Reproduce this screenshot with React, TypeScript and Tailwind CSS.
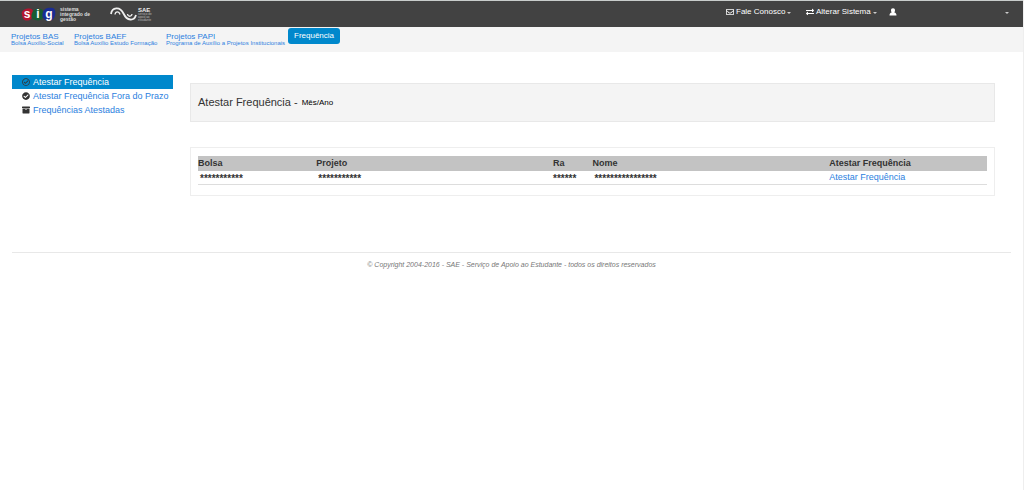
import { FaRegEnvelope, FaRegCheckCircle, FaCheckCircle, FaArchive, FaExchangeAlt } from "react-icons/fa";

const projects = [
  { title: "Projetos BAS", sub: "Bolsa Auxílio-Social" },
  { title: "Projetos BAEF", sub: "Bolsa Auxílio Estudo Formação" },
  { title: "Projetos PAPI", sub: "Programa de Auxílio a Projetos Institucionais" },
];

const menu = [
  { label: "Atestar Frequência", Icon: FaRegCheckCircle, active: true },
  { label: "Atestar Frequência Fora do Prazo", Icon: FaCheckCircle, active: false },
  { label: "Frequências Atestadas", Icon: FaArchive, active: false },
];

function Caret() {
  return (
    <svg viewBox="0 0 4 2" className="mt-px h-[2px] w-1" fill="#cccccc" aria-hidden="true">
      <path d="M0 0h4L2 2z" />
    </svg>
  );
}

function UserIcon() {
  return (
    <svg viewBox="0 0 8 8" className="size-2" fill="currentColor" aria-hidden="true">
      <path d="M4 .3C5.300 .3 6 1.200 6 2.400C6 3.200 5.700 3.900 5.300 4.400C6.800 4.700 7.500 5.600 7.500 7.500H.5C.5 5.600 1.200 4.700 2.700 4.400C2.300 3.900 2 3.200 2 2.400C2 1.200 2.700 .3 4 .3Z" />
    </svg>
  );
}

function SigLogo() {
  return (
    <a href="#" className="flex items-center gap-1" aria-label="Sistema integrado de gestão">
      <span className="relative flex h-[15px] w-[35px] items-center text-[12px] leading-[14px] font-bold text-white">
        <svg viewBox="0 0 35 15" className="absolute inset-0 size-full" aria-hidden="true">
          <path d="M1 8C0 4 3 2 7 1.500C10 1 12 2 12 5C12 9 11 13 7 13.500C3 14 2 12 1 8Z" fill="#b5152f" />
          <path d="M11 6C12 2 16 1 20 2C23 3 23 8 22 11C20 14 15 14 12 12C10 11 10 9 11 6Z" fill="#175c32" />
          <path d="M22 5C23 1 28 0 32 1C35 2 35 8 33 11C31 15 26 14 23 12C21 10 21 8 22 5Z" fill="#1a2c93" />
        </svg>
        <span className="relative w-3 text-center">s</span>
        <span className="relative w-[10px] text-center">i</span>
        <span className="relative w-3 text-center">g</span>
      </span>
      <span className="text-[5px] leading-[5px] font-bold text-[#dddddd]">
        sistema<br />integrado de<br />gestão
      </span>
    </a>
  );
}

function SaeLogo() {
  return (
    <a href="#" className="flex items-center gap-px text-[#eeeeee]" aria-label="SAE">
      <svg viewBox="0 0 27 16" className="h-4 w-[27px]" fill="none" stroke="currentColor" aria-hidden="true">
        <path d="M1 8C2 1 10 0 13.500 7.500C17 15 24 15.500 26 9" strokeWidth="1.800" />
        <path d="M5 8.500C5.500 5 9 5 10 8.500M17.500 8C18 11 21.500 11 22 8" strokeWidth="1.300" />
      </svg>
      <span>
        <span className="block text-[6px] leading-[6px] font-bold">SAE</span>
        <span className="block text-[3px] leading-[3px] text-[#bbbbbb]">
          serviço de<br />apoio ao<br />estudante
        </span>
      </span>
    </a>
  );
}

export default function App() {
  return (
    <div className="min-h-screen border-r border-[#eeeeee] bg-white font-['Liberation_Sans',Arial,sans-serif] text-[9px] text-[#333333]">
      <header className="flex h-[27px] items-center border-t border-[#c8cccb] bg-[#424242] pl-[21px] text-[8px] text-white">
        <SigLogo />
        <div className="ml-5">
          <SaeLogo />
        </div>
        <nav className="ml-auto flex w-[297px] items-center pb-1">
          <button className="flex w-20 items-center gap-[2px]">
            <FaRegEnvelope className="size-2" />Fale Conosco<Caret />
          </button>
          <button className="flex w-[83px] items-center gap-[2px]">
            <FaExchangeAlt className="size-2" />Alterar Sistema<Caret />
          </button>
          <button className="flex flex-1 items-center justify-between pr-[14px]" aria-label="Usuário">
            <UserIcon /><Caret />
          </button>
        </nav>
      </header>

      <nav className="flex h-[25px] items-start bg-[#f4f4f4] pl-[11px]">
        <div className="grid grid-cols-[63px_92px_122px]">
          {projects.map((p) => (
            <a key={p.title} href="#" className="block pt-[5px] whitespace-nowrap text-[#2c7fe0]">
              <span className="block text-[8px] leading-[9px]">{p.title}</span>
              <span className="block text-[6px] leading-[5px]">{p.sub}</span>
            </a>
          ))}
        </div>
        <a href="#" className="mt-px flex h-4 items-center rounded-[3px] bg-[#0088cc] px-[6px] text-[8px] text-white">
          Frequência
        </a>
      </nav>

      <div className="mx-3 flex gap-[17px] pt-[23px]">
        <aside className="w-[161px] shrink-0">
          {menu.map(({ label, Icon, active }) => (
            <a
              key={label}
              href="#"
              className={`flex h-[14px] items-center gap-[3px] pl-[10px] whitespace-nowrap ${active ? "bg-[#0088cc] text-white" : "text-[#2c7fe0]"}`}
            >
              <Icon className="size-2 text-[#333333]" />
              <span className="pt-px">{label}</span>
            </a>
          ))}
        </aside>
        <main className="mr-4 min-w-0 flex-1 pt-2">
          <h1 className="flex h-[39px] items-center border border-[#e8e8e8] bg-[#f4f4f4] px-[7px] text-[11px]">
            Atestar Frequência -
            <span className="ml-1 pt-px text-[8px] text-black">Mês/Ano</span>
          </h1>
          <section className="mt-[25px] border border-[#eeeeee] px-[7px] pt-2 pb-[10px]">
            <table className="w-full table-fixed border-collapse text-left">
              <thead>
                <tr className="bg-[#c3c3c3] leading-[15px]">
                  <th className="w-[15%] p-0">Bolsa</th>
                  <th className="w-[30%] p-0">Projeto</th>
                  <th className="w-[5%] p-0">Ra</th>
                  <th className="w-[30%] p-0">Nome</th>
                  <th className="w-[20%] p-0">Atestar Frequência</th>
                </tr>
              </thead>
              <tbody>
                <tr className="border-b border-[#dddddd] align-bottom leading-[13px]">
                  <td className="p-0 pt-[2px] pl-[2px] text-[10px] leading-[11px] font-bold">***********</td>
                  <td className="p-0 pt-[2px] pl-[2px] text-[10px] leading-[11px] font-bold">***********</td>
                  <td className="p-0 pt-[2px] text-[10px] leading-[11px] font-bold">******</td>
                  <td className="p-0 pt-[2px] pl-[2px] text-[10px] leading-[11px] font-bold">****************</td>
                  <td className="p-0"><a href="#" className="text-[#2c7fe0]">Atestar Frequência</a></td>
                </tr>
              </tbody>
            </table>
          </section>
        </main>
      </div>

      <footer className="mx-3 mt-14 border-t border-[#e8e8e8] pt-[7px] text-center text-[7px] leading-[10px] text-[#777777] italic">
        © Copyright 2004-2016 - SAE - Serviço de Apoio ao Estudante - todos os direitos reservados
      </footer>
    </div>
  );
}
